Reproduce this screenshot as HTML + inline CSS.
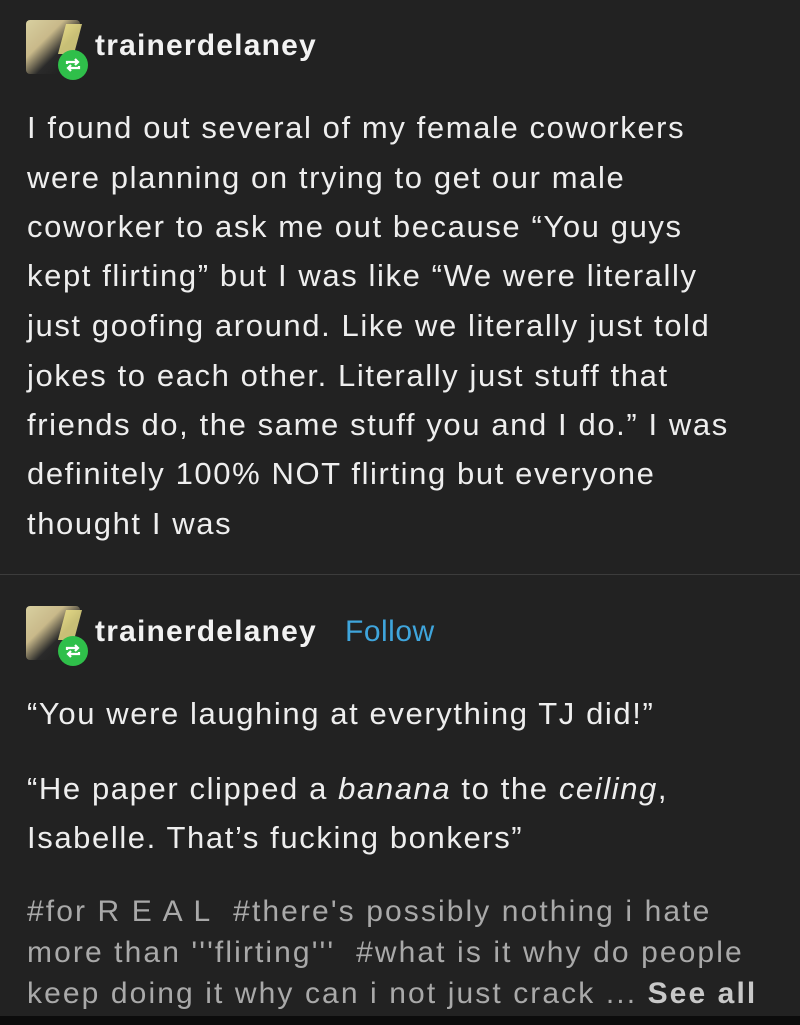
<!DOCTYPE html>
<html><head><style>
body{margin:0;width:800px;height:1025px;background:#222;overflow:hidden;font-family:"Liberation Sans",sans-serif;color:#eee;position:relative}
.abs{position:absolute;white-space:nowrap}
.av{position:absolute;width:54px;height:54px;border-radius:4px;background:linear-gradient(135deg,#d8d0a0 0%,#c9b98a 35%,#2a2a2a 60%,#1a1a1a 100%)}
.av:after{content:"";position:absolute;right:2px;top:4px;width:16px;height:30px;background:#f0e58a;transform:skewX(-15deg);opacity:.8}
.badge{position:absolute;width:30px;height:30px;border-radius:50%;background:#2fbf4a}
.badge svg{position:absolute;left:7px;top:7px}
.user{font-size:30px;font-weight:bold;color:#f2f2f2;letter-spacing:1.2px}
.body{font-size:31px;color:#eee;letter-spacing:1.6px}
.tags{font-size:30px;color:#a9a9a9;letter-spacing:2.1px}
</style></head><body>
<div class="av" style="left:26px;top:20px"></div>
<div class="badge" style="left:58px;top:50px"><svg width="16" height="16" viewBox="0 0 16 16" fill="none" stroke="#fff" stroke-width="2.2"><path d="M2 7V5h11M10 2l3 3-3 3M14 9v2H3M6 14l-3-3 3-3"/></svg></div>
<div class="abs user" style="left:95px;top:29px">trainerdelaney</div>

<div class="abs body" style="left:27px;top:110px">I found out several of my female coworkers</div>
<div class="abs body" style="left:27px;top:160px">were planning on trying to get our male</div>
<div class="abs body" style="left:27px;top:209px">coworker to ask me out because “You guys</div>
<div class="abs body" style="left:27px;top:258px">kept flirting” but I was like “We were literally</div>
<div class="abs body" style="left:27px;top:308px">just goofing around. Like we literally just told</div>
<div class="abs body" style="left:27px;top:358px">jokes to each other. Literally just stuff that</div>
<div class="abs body" style="left:27px;top:407px">friends do, the same stuff you and I do.” I was</div>
<div class="abs body" style="left:27px;top:456px">definitely 100% NOT flirting but everyone</div>
<div class="abs body" style="left:27px;top:506px">thought I was</div>

<div style="position:absolute;left:0;top:574px;width:800px;height:1px;background:#3c3c3c"></div>

<div class="av" style="left:26px;top:606px"></div>
<div class="badge" style="left:58px;top:636px"><svg width="16" height="16" viewBox="0 0 16 16" fill="none" stroke="#fff" stroke-width="2.2"><path d="M2 7V5h11M10 2l3 3-3 3M14 9v2H3M6 14l-3-3 3-3"/></svg></div>
<div class="abs user" style="left:95px;top:615px">trainerdelaney</div>
<div class="abs" style="left:345px;top:615px;font-size:30px;color:#3fa5dc;letter-spacing:0.5px">Follow</div>

<div class="abs body" style="left:27px;top:696px">“You were laughing at everything TJ did!”</div>
<div class="abs body" style="left:27px;top:771px">“He paper clipped a <i>banana</i> to the <i>ceiling</i>,</div>
<div class="abs body" style="left:27px;top:820px">Isabelle. That’s fucking bonkers”</div>

<div class="abs tags" style="left:27px;top:895px">#for R E A L&nbsp; #there's possibly nothing i hate</div>
<div class="abs tags" style="left:27px;top:936px">more than '''flirting'''&nbsp; #what is it why do people</div>
<div class="abs tags" style="left:27px;top:977px">keep doing it why can i not just crack ... <b style="color:#c8c8c8">See all</b></div>
<div style="position:absolute;left:0;top:1016px;width:800px;height:9px;background:#0c0c0c"></div>
</body></html>
